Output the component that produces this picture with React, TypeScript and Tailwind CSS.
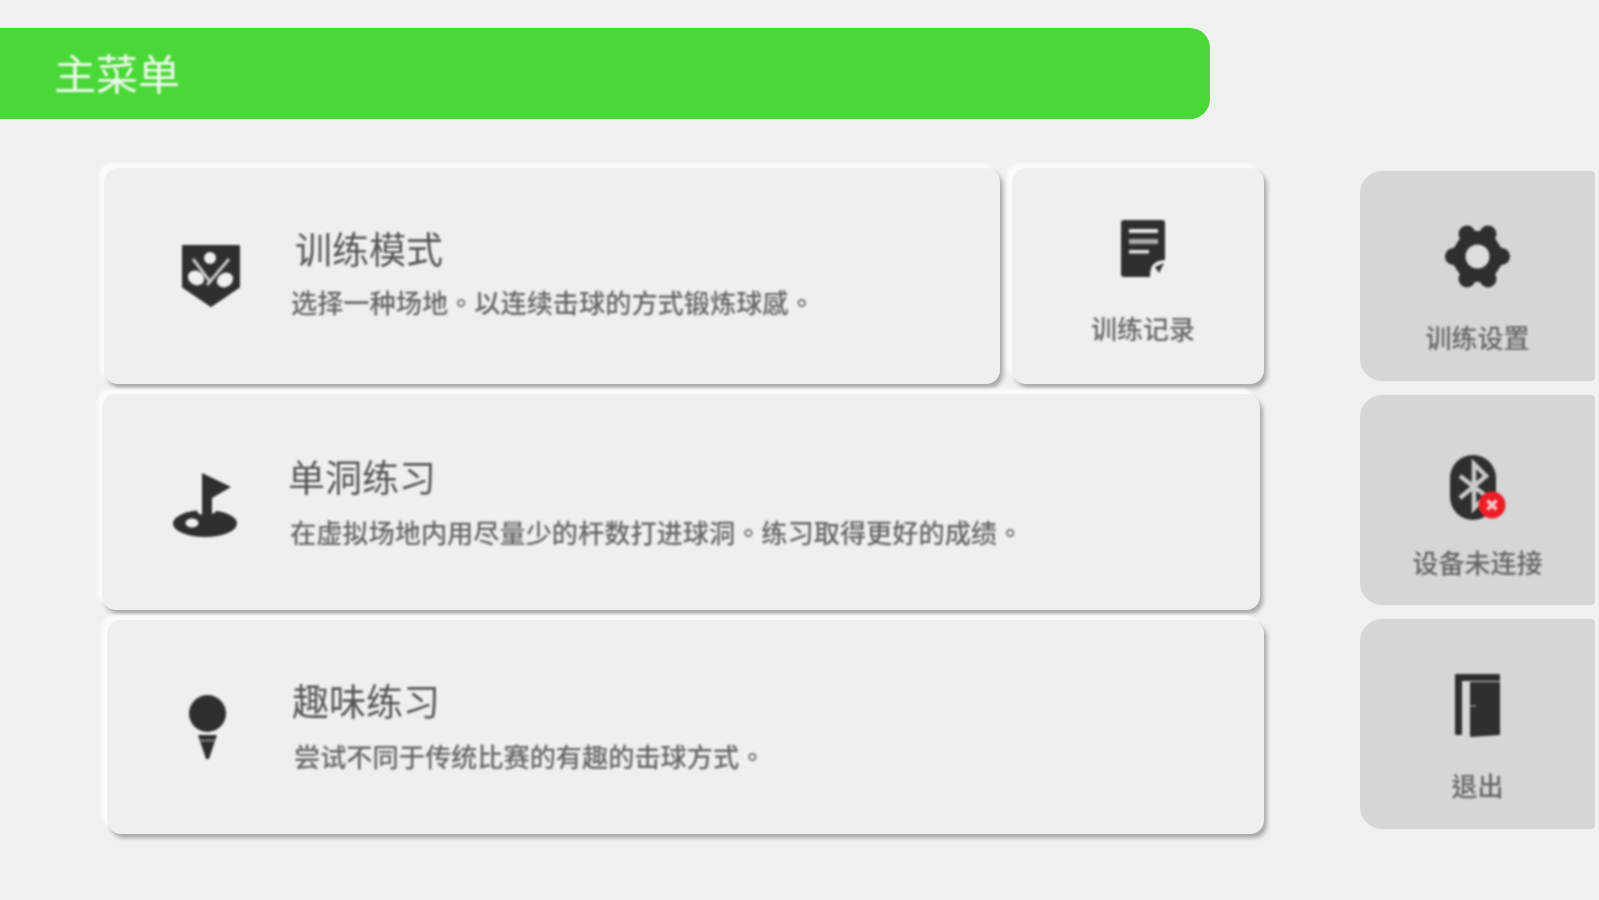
import React from "react";

const font = { fontFamily: '"Noto Sans CJK TC", "Noto Sans CJK SC", "Noto Sans", sans-serif' };

const Shield = () => (
  <svg width="58" height="62" viewBox="0 0 58 62" className="blur-[0.8px]">
    <path d="M1 1H57V42L29 61L1 42Z" fill="#2f2f2f" stroke="#2f2f2f" strokeWidth="2" strokeLinejoin="round" />
    <circle cx="28" cy="13" r="6" fill="#efefef" />
    <path d="M11 14L29 38M47 14L25 40" stroke="#c8c8c8" strokeWidth="3" fill="none" />
    <ellipse cx="14" cy="33" rx="8.5" ry="7" fill="#efefef" transform="rotate(30 14 33)" />
    <ellipse cx="43" cy="35" rx="8.5" ry="7" fill="#efefef" transform="rotate(-30 43 35)" />
  </svg>
);

const Flag = () => (
  <svg width="64" height="64" viewBox="0 0 64 64" className="blur-[0.8px]">
    <ellipse cx="32" cy="50.5" rx="32" ry="13.5" fill="#2f2f2f" />
    <ellipse cx="19" cy="50" rx="6.5" ry="4.5" fill="#efefef" />
    <path d="M24 38C26 44 40 44 44 37L40 33H26Z" fill="#efefef" />
    <path d="M29 51V0L58 14L39 25V51Z" fill="#2f2f2f" />
  </svg>
);

const Tee = () => (
  <svg width="39" height="64" viewBox="0 0 39 64" className="blur-[0.8px]">
    <circle cx="19.5" cy="18.5" r="18.5" fill="#2f2f2f" />
    <path d="M10 40H29L27 46L21 64H18L12 46Z" fill="#2f2f2f" />
    <path d="M11 45.5H28" stroke="#9b9b9b" strokeWidth="1.5" />
  </svg>
);

const Doc = () => (
  <svg width="44" height="57" viewBox="0 0 44 57" className="blur-[0.8px]">
    <rect x="0" y="0" width="44" height="57" rx="3" fill="#2f2f2f" />
    <rect x="8" y="9" width="29" height="4" fill="#e4e4e4" />
    <rect x="8" y="19" width="29" height="5" fill="#a9a9a9" />
    <rect x="8" y="30" width="20" height="3.5" fill="#e4e4e4" />
    <path d="M29 57C29 46 32 41 44 40V57Z" fill="#efefef" />
    <path d="M34 47L43 43L38 53Z" fill="#2f2f2f" />
  </svg>
);

const Gear = () => (
  <svg width="65" height="63" viewBox="0 0 65 63" className="blur-[0.8px]">
    <g fill="#2f2f2f">
      <path d="M22 10H43L57 31.5L43 53H22L8 31.5Z" stroke="#2f2f2f" strokeWidth="8" strokeLinejoin="round" />
      <circle cx="22" cy="9" r="8.5" />
      <circle cx="43" cy="9" r="8.5" />
      <circle cx="22" cy="54" r="8.5" />
      <circle cx="43" cy="54" r="8.5" />
      <circle cx="8.5" cy="31.5" r="8.5" />
      <circle cx="56.5" cy="31.5" r="8.5" />
    </g>
    <circle cx="32.5" cy="31.5" r="12" fill="#dcdcdc" />
  </svg>
);

const Bt = () => (
  <svg width="56" height="66" viewBox="0 0 56 66" className="blur-[0.8px]">
    <rect x="0" y="0" width="46" height="65" rx="23" fill="#2f2f2f" />
    <path d="M10 21L36 41L24 53V9L36 21L10 43" stroke="#c9c9c9" strokeWidth="4.5" fill="none" />
    <circle cx="42" cy="50" r="13.5" fill="#ee1c25" />
    <path d="M37.5 45.5L46.5 54.5M46.5 45.5L37.5 54.5" stroke="#f6c9c9" strokeWidth="3.5" />
  </svg>
);

const Door = () => (
  <svg width="45" height="63" viewBox="0 0 45 63" className="blur-[0.8px]">
    <path d="M0 1A1 1 0 0 1 1 0H44A1 1 0 0 1 45 1V7H7V60A1 1 0 0 1 6 61H1A1 1 0 0 1 0 60Z" fill="#2f2f2f" />
    <path d="M15 8H45V61L15 63Z" fill="#2f2f2f" />
    <path d="M15 32H21" stroke="#8a8a8a" strokeWidth="1.5" />
  </svg>
);

function Text({
  title,
  sub,
  className,
  titleCls,
  subCls,
}: {
  title: string;
  sub: string;
  className: string;
  titleCls: string;
  subCls: string;
}) {
  return (
    <div className={`flex flex-col blur-[0.9px] ${className}`}>
      <div className={`text-[37px] leading-[44px] text-[#555] whitespace-nowrap ${titleCls}`}>{title}</div>
      <div className={`text-[26.2px] leading-[32px] font-medium text-[#666] whitespace-nowrap ${subCls}`} lang="zh-Hant">
        {sub}
      </div>
    </div>
  );
}

const cardCls =
  "bg-[#efefef] rounded-[14px] flex items-center shadow-[-5px_-5px_3px_#fbfbfb,3px_4px_4px_#a9a9a9]";

function Tile({ icon, label, boxCls, labelCls }: { icon: React.ReactNode; label: string; boxCls: string; labelCls: string }) {
  return (
    <div className="h-[210px] bg-[#d6d6d6] rounded-l-[22px] rounded-r-[4px] flex flex-col items-center">
      <div className={`flex items-end ${boxCls}`}>{icon}</div>
      <div className={`text-[26px] leading-[34px] font-medium text-[#666] blur-[0.9px] whitespace-nowrap ${labelCls}`}>{label}</div>
    </div>
  );
}

export default function App() {
  return (
    <div className="w-[1599px] h-[900px] bg-[#f0f0f0] overflow-hidden pt-[28px]" style={font}>
      <div className="w-[1210px] h-[91px] bg-[#4ad838] rounded-r-[20px] flex items-center pl-[54px] pb-[4px]">
        <span className="text-[42px] leading-none text-[#eef9ec] blur-[0.9px]">主菜单</span>
      </div>
      <div className="flex mt-[49px] pr-[4px]">
        <div className="flex flex-col gap-[10px] ml-[104px] w-[1160px]">
          <div className="flex gap-[12px]">
            <div className={`${cardCls} h-[216px] w-[896px] pl-[78px]`}>
              <Shield />
              <Text
                title="训练模式"
                sub="选择一种场地。以连续击球的方式锻炼球感。"
                className="ml-[51px] mb-[8px]"
                titleCls="pl-[4px]"
                subCls="mt-[16px]"
              />
            </div>
            <div className={`${cardCls} h-[216px] w-[252px] flex-col pl-[10px]`}>
              <div className="mt-[52px]"><Doc /></div>
              <div className="text-[26px] leading-[34px] mt-[34px] font-medium text-[#666] blur-[0.9px]">训练记录</div>
            </div>
          </div>
          <div className={`${cardCls} h-[216px] w-[1158px] ml-[-2px] pl-[71px] pt-[6px]`}>
            <Flag />
            <Text
              title="单洞练习"
              sub="在虚拟场地内用尽量少的杆数打进球洞。练习取得更好的成绩。"
              className="ml-[51px] mb-[8px]"
              titleCls=""
              subCls="pl-[2px] mt-[18px]"
            />
          </div>
          <div className={`${cardCls} h-[214px] w-[1157px] ml-[3px] pl-[81px]`}>
            <Tee />
            <Text
              title="趣味练习"
              sub="尝试不同于传统比赛的有趣的击球方式。"
              className="ml-[65px] mb-[4px]"
              titleCls=""
              subCls="pl-[2px] mt-[18px]"
            />
          </div>
        </div>
        <div className="ml-auto w-[235px] flex flex-col gap-[14px] mt-[3px]">
          <Tile icon={<Gear />} label="训练设置" boxCls="h-[117px]" labelCls="mt-[32px]" />
          <Tile icon={<Bt />} label="设备未连接" boxCls="h-[126px]" labelCls="mt-[24px]" />
          <Tile icon={<Door />} label="退出" boxCls="h-[118px]" labelCls="mt-[31px]" />
        </div>
      </div>
    </div>
  );
}
